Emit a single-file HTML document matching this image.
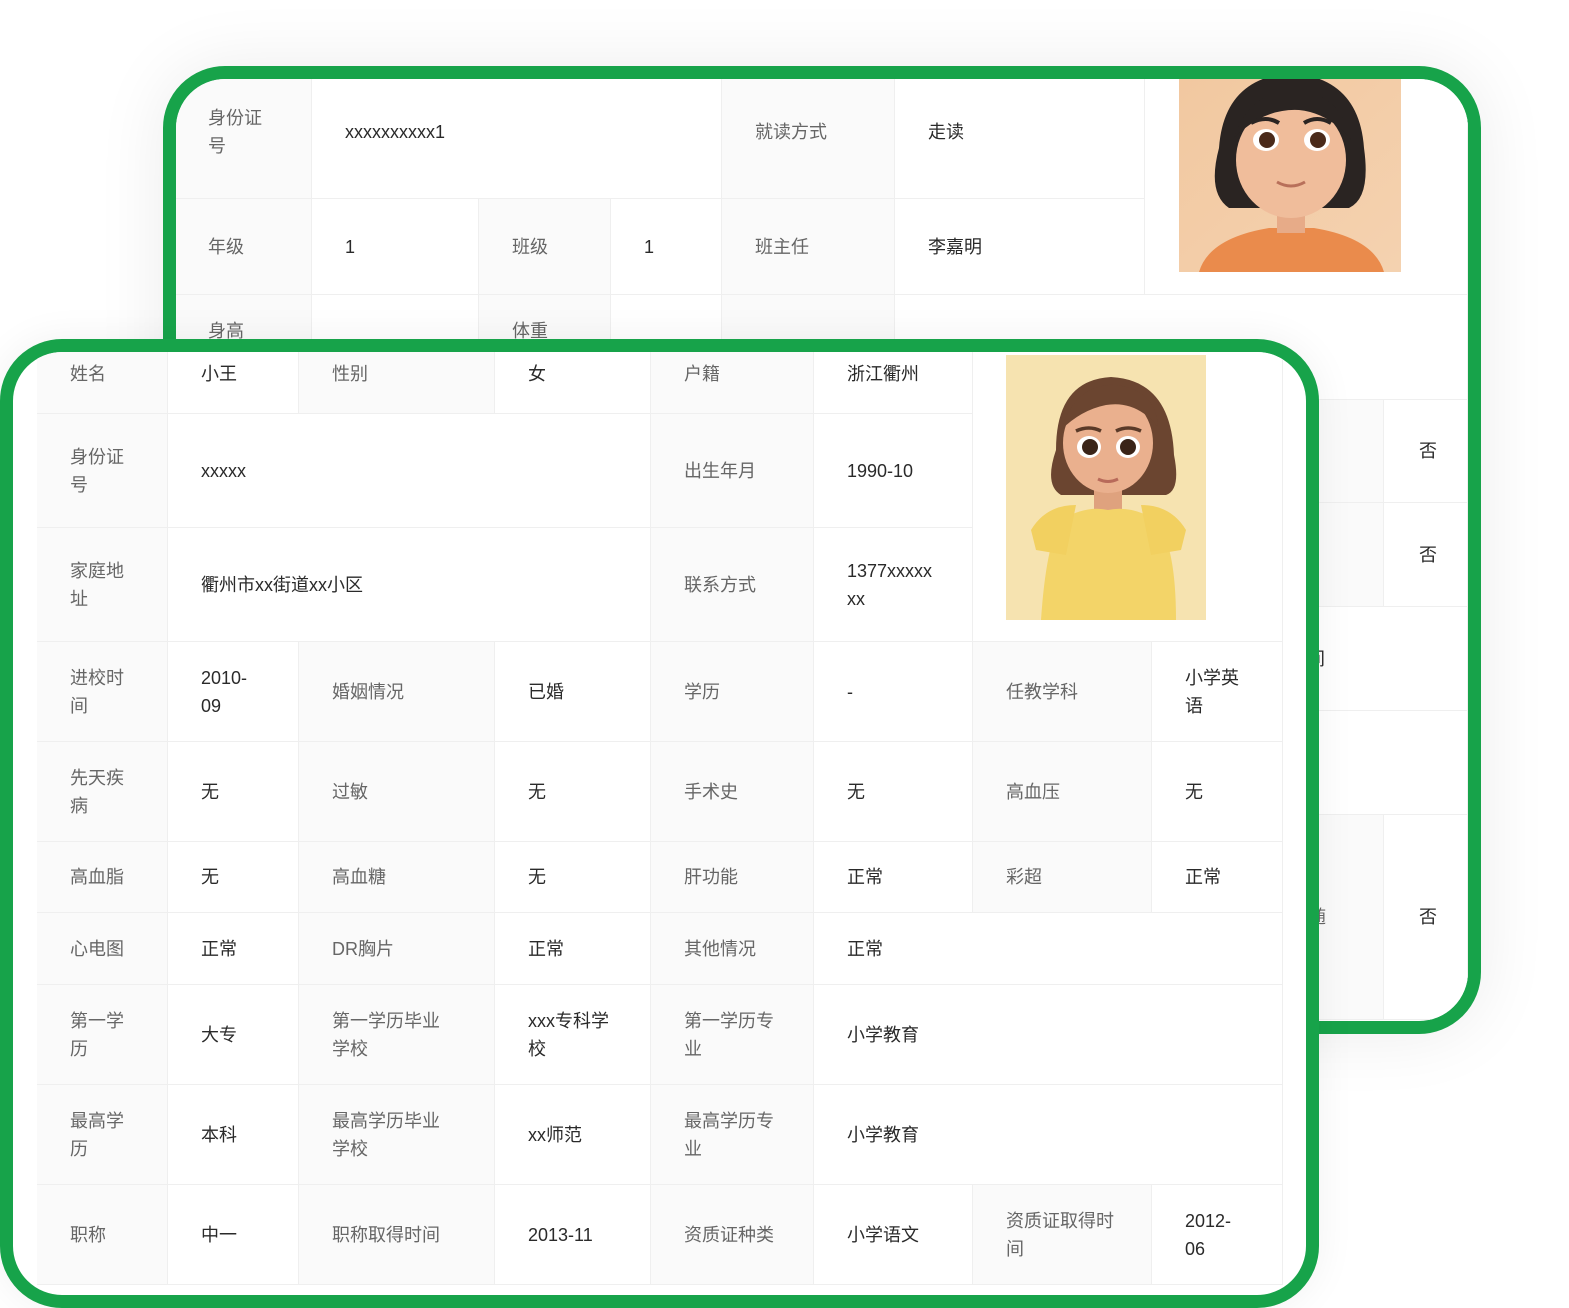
<!DOCTYPE html>
<html><head><meta charset="utf-8">
<style>
*{margin:0;padding:0;box-sizing:border-box}
html,body{width:1569px;height:1308px;overflow:hidden;background:#fff;font-family:"Liberation Sans","Noto Sans CJK SC",sans-serif}
.card{position:absolute;border:13px solid #17a34a;border-radius:62px;background:#fff;overflow:hidden}
.c{position:absolute;display:flex;align-items:center;padding-left:33px;font-size:18px;line-height:28px;white-space:nowrap;border-right:1px solid #efefef;border-bottom:1px solid #efefef}
.l{background:#fafafa;color:#666}
.v{background:#fff;color:#2a2a2a}
</style></head><body>

<!-- back card -->
<div class="card" id="back" style="left:163px;top:66px;width:1318px;height:968px;box-shadow:0 0 70px rgba(0,0,0,0.08)">
<div style="position:absolute;left:-176px;top:-79px;width:1569px;height:1308px">
<div class="c l" style="left:175px;top:66px;width:137px;height:133px">身份证<br>号</div>
<div class="c v" style="left:312px;top:66px;width:410px;height:133px">xxxxxxxxxx1</div>
<div class="c l" style="left:722px;top:66px;width:173px;height:133px">就读方式</div>
<div class="c v" style="left:895px;top:66px;width:250px;height:133px">走读</div>
<div class="c v" style="left:1145px;top:66px;width:323px;height:229px;padding:0">
<svg style="position:absolute;left:34px;top:12px" width="222" height="194" viewBox="0 0 222 194">
<defs><linearGradient id="bg1" x1="0" y1="0" x2="1" y2="1"><stop offset="0" stop-color="#f2c8a0"/><stop offset="1" stop-color="#f4d2b0"/></linearGradient></defs>
<rect width="222" height="194" fill="url(#bg1)"/>
<path d="M40 70 Q45 0 112 -5 Q180 0 185 70 Q192 120 170 130 L50 130 Q28 115 40 70Z" fill="#2a2422"/>
<path d="M20 194 Q30 160 90 150 L135 150 Q195 160 205 194Z" fill="#ea8b4c"/>
<rect x="98" y="120" width="28" height="35" fill="#e7ab88"/>
<ellipse cx="112" cy="82" rx="55" ry="58" fill="#f0bd9b"/>
<path d="M55 60 Q70 15 112 12 Q160 12 172 62 Q150 35 120 32 Q85 30 55 60Z" fill="#2a2422"/>
<ellipse cx="87" cy="62" rx="13" ry="11" fill="#fff"/><circle cx="88" cy="62" r="8" fill="#4a2a1a"/>
<ellipse cx="138" cy="62" rx="13" ry="11" fill="#fff"/><circle cx="139" cy="62" r="8" fill="#4a2a1a"/>
<path d="M72 45 Q87 37 100 45" stroke="#2a2422" stroke-width="4" fill="none"/>
<path d="M125 45 Q138 37 152 45" stroke="#2a2422" stroke-width="4" fill="none"/>
<path d="M98 104 Q112 112 126 104" stroke="#b8705a" stroke-width="3" fill="none"/>
</svg></div>
<div class="c l" style="left:175px;top:199px;width:137px;height:96px">年级</div>
<div class="c v" style="left:312px;top:199px;width:167px;height:96px">1</div>
<div class="c l" style="left:479px;top:199px;width:132px;height:96px">班级</div>
<div class="c v" style="left:611px;top:199px;width:111px;height:96px">1</div>
<div class="c l" style="left:722px;top:199px;width:173px;height:96px">班主任</div>
<div class="c v" style="left:895px;top:199px;width:250px;height:96px">李嘉明</div>
<div class="c l" style="left:175px;top:295px;width:137px;height:72px">身高</div>
<div class="c v" style="left:312px;top:295px;width:167px;height:72px"></div>
<div class="c l" style="left:479px;top:295px;width:132px;height:72px">体重</div>
<div class="c v" style="left:611px;top:295px;width:111px;height:72px"></div>
<div class="c l" style="left:722px;top:295px;width:173px;height:72px"></div>
<div class="c v" style="left:895px;top:295px;width:573px;height:105px"></div>
<div class="c l" style="left:1250px;top:400px;width:134px;height:103px"></div>
<div class="c v" style="left:1384px;top:400px;width:84px;height:103px;padding-left:35px">否</div>
<div class="c l" style="left:1250px;top:503px;width:134px;height:104px"></div>
<div class="c v" style="left:1384px;top:503px;width:84px;height:104px;padding-left:35px">否</div>
<div class="c v" style="left:1250px;top:607px;width:218px;height:104px;padding-left:57px">间</div>
<div class="c v" style="left:1250px;top:711px;width:218px;height:104px"></div>
<div class="c l" style="left:1250px;top:815px;width:134px;height:205px;padding-left:58px;color:#666">随</div>
<div class="c v" style="left:1384px;top:815px;width:84px;height:205px;padding-left:35px">否</div>
</div></div>

<!-- front card -->
<div class="card" id="front" style="left:0;top:339px;width:1319px;height:969px;box-shadow:0 0 40px rgba(0,0,0,0.06)">
<div style="position:absolute;left:-13px;top:-352px;width:1569px;height:1308px">
<div class="c l" style="left:37px;top:334px;width:131px;height:80px">姓名</div>
<div class="c v" style="left:168px;top:334px;width:131px;height:80px">小王</div>
<div class="c l" style="left:299px;top:334px;width:196px;height:80px">性别</div>
<div class="c v" style="left:495px;top:334px;width:156px;height:80px">女</div>
<div class="c l" style="left:651px;top:334px;width:163px;height:80px">户籍</div>
<div class="c v" style="left:814px;top:334px;width:159px;height:80px">浙江衢州</div>
<div class="c v" style="left:973px;top:334px;width:310px;height:308px;padding:0">
<svg style="position:absolute;left:33px;top:21px" width="200" height="265" viewBox="0 0 200 265">
<rect width="200" height="265" fill="#f6e3b0"/>
<path d="M50 95 Q50 25 105 22 Q165 25 168 100 Q175 135 160 140 L55 140 Q38 130 50 95Z" fill="#6b4530"/>
<rect x="88" y="115" width="28" height="45" fill="#dfa27e"/>
<path d="M35 265 Q40 190 55 165 Q80 150 102 155 Q125 150 150 165 Q170 190 170 265Z" fill="#f3d468"/>
<path d="M25 175 Q40 150 70 150 L60 200 L30 195Z" fill="#f2d060"/>
<path d="M180 175 Q165 150 135 150 L145 200 L175 195Z" fill="#f2d060"/>
<ellipse cx="102" cy="88" rx="45" ry="50" fill="#eab08e"/>
<path d="M55 75 Q70 28 110 30 Q150 35 152 72 Q130 45 100 50 Q75 55 55 75Z" fill="#6b4530"/>
<ellipse cx="83" cy="92" rx="12" ry="11" fill="#fff"/><circle cx="84" cy="92" r="8" fill="#3a2418"/>
<ellipse cx="122" cy="92" rx="12" ry="11" fill="#fff"/><circle cx="122" cy="92" r="8" fill="#3a2418"/>
<path d="M70 76 Q83 70 95 76" stroke="#5a3a28" stroke-width="3.5" fill="none"/>
<path d="M110 76 Q122 70 135 76" stroke="#5a3a28" stroke-width="3.5" fill="none"/>
<path d="M92 124 Q102 129 112 124" stroke="#b86a5a" stroke-width="3" fill="none"/>
</svg></div>
<div class="c l" style="left:37px;top:414px;width:131px;height:114px">身份证<br>号</div>
<div class="c v" style="left:168px;top:414px;width:483px;height:114px">xxxxx</div>
<div class="c l" style="left:651px;top:414px;width:163px;height:114px">出生年月</div>
<div class="c v" style="left:814px;top:414px;width:159px;height:114px">1990-10</div>
<div class="c l" style="left:37px;top:528px;width:131px;height:114px">家庭地<br>址</div>
<div class="c v" style="left:168px;top:528px;width:483px;height:114px">衢州市xx街道xx小区</div>
<div class="c l" style="left:651px;top:528px;width:163px;height:114px">联系方式</div>
<div class="c v" style="left:814px;top:528px;width:159px;height:114px">1377xxxxx<br>xx</div>
<div class="c l" style="left:37px;top:642px;width:131px;height:100px">进校时<br>间</div>
<div class="c v" style="left:168px;top:642px;width:131px;height:100px">2010-<br>09</div>
<div class="c l" style="left:299px;top:642px;width:196px;height:100px">婚姻情况</div>
<div class="c v" style="left:495px;top:642px;width:156px;height:100px">已婚</div>
<div class="c l" style="left:651px;top:642px;width:163px;height:100px">学历</div>
<div class="c v" style="left:814px;top:642px;width:159px;height:100px">-</div>
<div class="c l" style="left:973px;top:642px;width:179px;height:100px">任教学科</div>
<div class="c v" style="left:1152px;top:642px;width:131px;height:100px">小学英<br>语</div>
<div class="c l" style="left:37px;top:742px;width:131px;height:100px">先天疾<br>病</div>
<div class="c v" style="left:168px;top:742px;width:131px;height:100px">无</div>
<div class="c l" style="left:299px;top:742px;width:196px;height:100px">过敏</div>
<div class="c v" style="left:495px;top:742px;width:156px;height:100px">无</div>
<div class="c l" style="left:651px;top:742px;width:163px;height:100px">手术史</div>
<div class="c v" style="left:814px;top:742px;width:159px;height:100px">无</div>
<div class="c l" style="left:973px;top:742px;width:179px;height:100px">高血压</div>
<div class="c v" style="left:1152px;top:742px;width:131px;height:100px">无</div>
<div class="c l" style="left:37px;top:842px;width:131px;height:71px">高血脂</div>
<div class="c v" style="left:168px;top:842px;width:131px;height:71px">无</div>
<div class="c l" style="left:299px;top:842px;width:196px;height:71px">高血糖</div>
<div class="c v" style="left:495px;top:842px;width:156px;height:71px">无</div>
<div class="c l" style="left:651px;top:842px;width:163px;height:71px">肝功能</div>
<div class="c v" style="left:814px;top:842px;width:159px;height:71px">正常</div>
<div class="c l" style="left:973px;top:842px;width:179px;height:71px">彩超</div>
<div class="c v" style="left:1152px;top:842px;width:131px;height:71px">正常</div>
<div class="c l" style="left:37px;top:913px;width:131px;height:72px">心电图</div>
<div class="c v" style="left:168px;top:913px;width:131px;height:72px">正常</div>
<div class="c l" style="left:299px;top:913px;width:196px;height:72px">DR胸片</div>
<div class="c v" style="left:495px;top:913px;width:156px;height:72px">正常</div>
<div class="c l" style="left:651px;top:913px;width:163px;height:72px">其他情况</div>
<div class="c v" style="left:814px;top:913px;width:469px;height:72px">正常</div>
<div class="c l" style="left:37px;top:985px;width:131px;height:100px">第一学<br>历</div>
<div class="c v" style="left:168px;top:985px;width:131px;height:100px">大专</div>
<div class="c l" style="left:299px;top:985px;width:196px;height:100px">第一学历毕业<br>学校</div>
<div class="c v" style="left:495px;top:985px;width:156px;height:100px">xxx专科学<br>校</div>
<div class="c l" style="left:651px;top:985px;width:163px;height:100px">第一学历专<br>业</div>
<div class="c v" style="left:814px;top:985px;width:469px;height:100px">小学教育</div>
<div class="c l" style="left:37px;top:1085px;width:131px;height:100px">最高学<br>历</div>
<div class="c v" style="left:168px;top:1085px;width:131px;height:100px">本科</div>
<div class="c l" style="left:299px;top:1085px;width:196px;height:100px">最高学历毕业<br>学校</div>
<div class="c v" style="left:495px;top:1085px;width:156px;height:100px">xx师范</div>
<div class="c l" style="left:651px;top:1085px;width:163px;height:100px">最高学历专<br>业</div>
<div class="c v" style="left:814px;top:1085px;width:469px;height:100px">小学教育</div>
<div class="c l" style="left:37px;top:1185px;width:131px;height:100px">职称</div>
<div class="c v" style="left:168px;top:1185px;width:131px;height:100px">中一</div>
<div class="c l" style="left:299px;top:1185px;width:196px;height:100px">职称取得时间</div>
<div class="c v" style="left:495px;top:1185px;width:156px;height:100px">2013-11</div>
<div class="c l" style="left:651px;top:1185px;width:163px;height:100px">资质证种类</div>
<div class="c v" style="left:814px;top:1185px;width:159px;height:100px">小学语文</div>
<div class="c l" style="left:973px;top:1185px;width:179px;height:100px">资质证取得时<br>间</div>
<div class="c v" style="left:1152px;top:1185px;width:131px;height:100px">2012-<br>06</div>
</div></div>
</body></html>
